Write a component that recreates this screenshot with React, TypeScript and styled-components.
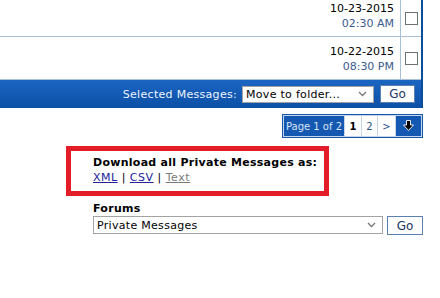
import React from 'react';
import styled, { createGlobalStyle } from 'styled-components';

const GlobalStyle = createGlobalStyle`
  html, body {
    margin: 0;
    padding: 0;
    background: #fff;
  }
  body {
    font-family: 'DejaVu Sans', Verdana, sans-serif;
    font-size: 11px;
    color: #000;
  }
`;

const messages = [
  { id: 1, date: '10-23-2015', time: '02:30 AM', padTop: 1, height: 37 },
  { id: 2, date: '10-22-2015', time: '08:30 PM', padTop: 7, height: 43 },
];

const Chevron = () => (
  <svg width="9" height="6" viewBox="0 0 9 6">
    <path d="M1 1 L4.5 4.5 L8 1" fill="none" stroke="#777" strokeWidth="1.3" />
  </svg>
);

const DownArrow = () => (
  <svg width="11" height="12" viewBox="0 0 11 12">
    <path
      d="M3.5 0.5 H7.5 V5 H10.5 L5.5 10.5 L0.5 5 H3.5 Z"
      fill="#000"
      stroke="#fff"
      strokeWidth="0.9"
      strokeLinejoin="round"
    />
  </svg>
);

export default function App() {
  return (
    <Page>
      <GlobalStyle />

      <MessageTable>
        {messages.map((m) => (
          <Row key={m.id} $height={m.height}>
            <DateCell $padTop={m.padTop}>
              <div>{m.date}</div>
              <Time>{m.time}</Time>
            </DateCell>
            <CheckCell>
              <CheckBox />
            </CheckCell>
          </Row>
        ))}

        <FooterBar>
          <BarLabel>Selected Messages:</BarLabel>
          <FakeSelect $width={132} $height={17}>
            <span>Move to folder...</span>
            <Chevron />
          </FakeSelect>
          <GoButton $width={35} $height={18}>Go</GoButton>
        </FooterBar>
      </MessageTable>

      <Pager>
        <PagerCell $active $width={60}>Page 1 of 2</PagerCell>
        <PagerCell $current $width={16}>1</PagerCell>
        <PagerCell $width={15}>2</PagerCell>
        <PagerCell $width={17}>&gt;</PagerCell>
        <PagerCell $active $width={25}>
          <DownArrow />
        </PagerCell>
      </Pager>

      <DownloadBox>
        <Strong>Download all Private Messages as:</Strong>
        <LinkLine>
          <Link>XML</Link> | <Link>CSV</Link> | <Link $muted>Text</Link>
        </LinkLine>
      </DownloadBox>

      <ForumJump>
        <ForumLabel>Forums</ForumLabel>
        <JumpRow>
          <FakeSelect $width={290} $height={18}>
            <span>Private Messages</span>
            <Chevron />
          </FakeSelect>
          <GoButton $width={36} $height={19}>Go</GoButton>
        </JumpRow>
      </ForumJump>
    </Page>
  );
}

const Page = styled.div`
  width: 440px;
  height: 298px;
  display: flex;
  flex-direction: column;
  overflow: hidden;
`;

const MessageTable = styled.div`
  width: 423px;
  box-sizing: border-box;
  border-right: 2px solid #0e4d9c;
  display: flex;
  flex-direction: column;
`;

const Row = styled.div<{ $height: number }>`
  display: grid;
  grid-template-columns: 1fr 21px;
  height: ${(p) => p.$height}px;
  box-sizing: border-box;
  border-bottom: 1px solid #a9c1d6;
`;

const DateCell = styled.div<{ $padTop: number }>`
  text-align: right;
  padding: ${(p) => p.$padTop}px 6px 0 0;
  line-height: 15px;
`;

const Time = styled.div`
  color: #3a5a8e;
`;

const CheckCell = styled.div`
  border-left: 1px solid #a9c1d6;
  display: flex;
  align-items: center;
  justify-content: center;
`;

const CheckBox = styled.span`
  width: 13px;
  height: 13px;
  box-sizing: border-box;
  border: 1px solid #707070;
  background: #fff;
`;

const FooterBar = styled.div`
  height: 28px;
  display: flex;
  align-items: center;
  justify-content: flex-end;
  padding-right: 6px;
  background: linear-gradient(#1b65c2, #0b50a6);
`;

const BarLabel = styled.span`
  color: #eef3fa;
  margin-right: 5px;
  letter-spacing: 0.3px;
`;

const FakeSelect = styled.div<{ $width: number; $height: number }>`
  width: ${(p) => p.$width}px;
  height: ${(p) => p.$height}px;
  box-sizing: border-box;
  border: 1px solid #a3a3a3;
  background: #fff;
  display: flex;
  align-items: center;
  justify-content: space-between;
  padding: 0 6px 0 3px;
  font-size: 11px;
  letter-spacing: 0.3px;
  color: #000;
`;

const GoButton = styled.div<{ $width: number; $height: number }>`
  width: ${(p) => p.$width}px;
  height: ${(p) => p.$height}px;
  box-sizing: border-box;
  margin-left: 6px;
  border: 1px solid #5b7fae;
  background: #fff;
  color: #1a355f;
  font-size: 12px;
  display: flex;
  align-items: center;
  justify-content: center;
`;

const Pager = styled.div`
  align-self: flex-end;
  margin: 6px 17px 0 0;
  display: flex;
  gap: 1px;
  padding: 1px;
  border: 1px solid #1557ad;
  background: #c6d5e8;
`;

const PagerCell = styled.div<{ $active?: boolean; $current?: boolean; $width: number }>`
  width: ${(p) => p.$width}px;
  height: 20px;
  display: flex;
  align-items: center;
  justify-content: center;
  font-size: 10px;
  font-weight: ${(p) => (p.$current ? 'bold' : 'normal')};
  background: ${(p) => (p.$active ? '#1458b2' : '#fff')};
  color: ${(p) => (p.$active ? '#d8e4f3' : p.$current ? '#000' : '#2c4f86')};
`;

const DownloadBox = styled.div`
  margin: 8px 0 0 66px;
  width: 263px;
  height: 50px;
  box-sizing: border-box;
  border: 5px solid #e21d27;
  padding: 4px 0 0 22px;
  line-height: 15px;
`;

const Strong = styled.div`
  font-weight: bold;
  letter-spacing: 0.27px;
`;

const LinkLine = styled.div`
  color: #000;
  letter-spacing: 0.5px;
`;

const Link = styled.span<{ $muted?: boolean }>`
  color: ${(p) => (p.$muted ? '#7a7a7a' : '#22229c')};
  text-decoration: underline;
`;

const ForumJump = styled.div`
  margin: 6px 0 0 93px;
`;

const ForumLabel = styled.div`
  font-weight: bold;
  line-height: 14px;
  letter-spacing: 0.3px;
`;

const JumpRow = styled.div`
  display: flex;
  align-items: flex-start;

  & > div:last-child {
    margin-left: 4px;
  }
`;
